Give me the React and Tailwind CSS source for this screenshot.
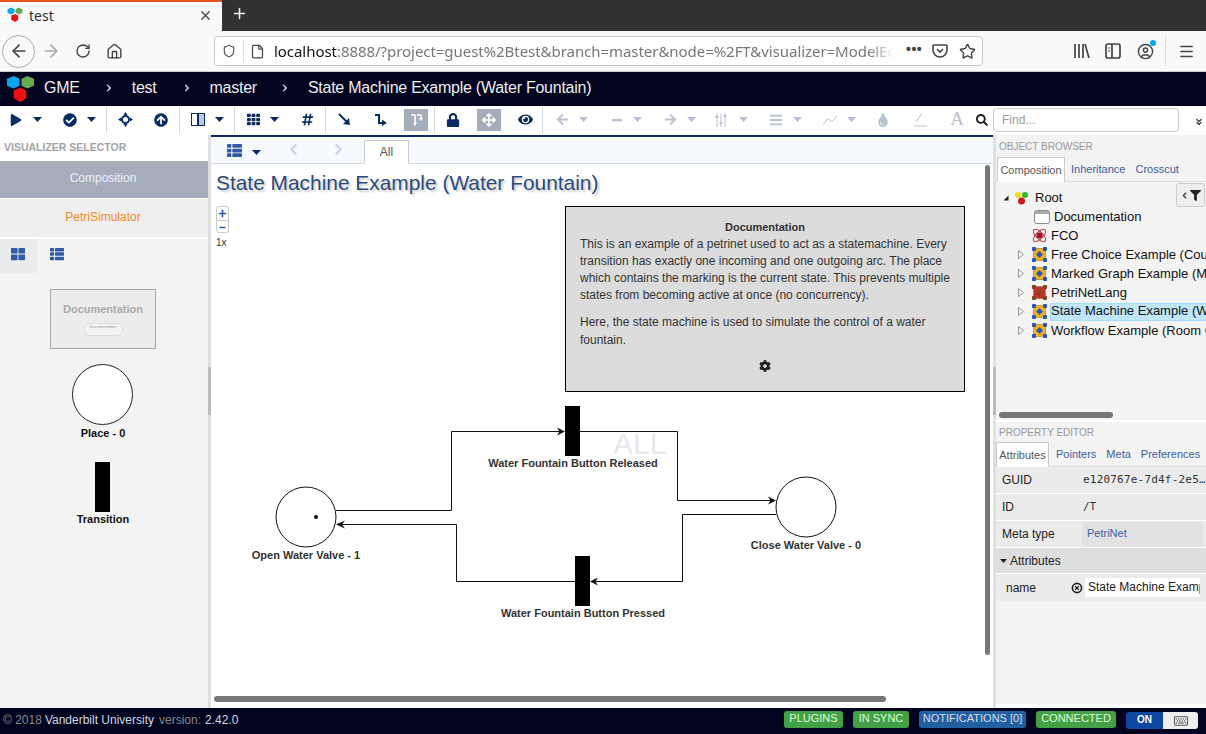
import { ArrowLeft, ArrowRight, RotateCw, Home, File, Star, CircleUser, Menu, X, Plus, Shield, ChevronsDown } from 'lucide-react';
import { FaCheckCircle, FaArrowCircleUp, FaTh, FaThLarge, FaThList, FaHashtag, FaLock, FaArrowsAlt, FaEye, FaArrowLeft, FaArrowRight, FaMinus, FaBars, FaTint, FaSearch, FaPlay, FaCog, FaFilter, FaChevronLeft, FaChevronRight, FaRegKeyboard } from 'react-icons/fa';

const NAVY = 'text-[#0b2c63]';
const FADED = 'text-[#b9c2d3]';

function Hexes({ size = 30 }) {
  return (
    <svg width={size} height={size} viewBox="0 0 30 30">
      <polygon points="8,1 14,4 14,11 8,14 1,11 1,4" fill="#0aa5f0" />
      <polygon points="22,1 29,4 29,11 22,14 16,11 16,4" fill="#6aa84f" />
      <polygon points="15,13 21,16 21,24 15,28 8,24 8,16" fill="#ee1111" />
    </svg>
  );
}

function Caret({ className = '', faded }) {
  return <span className={`w-[10px] h-[5px] shrink-0 flex justify-center ${className}`}>
    <svg width="9" height="5" viewBox="0 0 9 5"><polygon points="0,0 9,0 4.5,5" fill={faded ? '#b9c2d3' : '#0b2c63'} /></svg>
  </span>;
}

function Tool({ className = '', children, faded }) {
  return <span className={`w-6 h-[22px] shrink-0 flex items-center justify-center ${faded ? FADED : NAVY} ${className}`}>{children}</span>;
}

function Sep({ className = '' }) {
  return <span className={`w-px h-[26px] shrink-0 bg-[#d5d9e5] ${className}`} />;
}

function ModelIcon({ fill = '#eeb024', accent = '#2f55b5' }) {
  return (
    <svg width="15" height="15" viewBox="0 0 15 15" className="shrink-0">
      <rect x="1.5" y="1.5" width="12" height="12" fill={fill} stroke="#9a7a30" strokeWidth="0.6" />
      <rect x="0" y="0" width="4" height="4" rx="0.8" fill={accent} />
      <rect x="11" y="0" width="4" height="4" rx="0.8" fill={accent} />
      <rect x="0" y="11" width="4" height="4" rx="0.8" fill={accent} />
      <rect x="11" y="11" width="4" height="4" rx="0.8" fill={accent} />
      <polygon points="7.5,4 11,7.5 7.5,11 4,7.5" fill={accent} />
    </svg>
  );
}

function TreeRow({ label, icon, selected, expander, indent }) {
  return (
    <div className={`h-[19px] flex items-center ${indent}`}>
      {expander && (
        <svg width="6" height="9" viewBox="0 0 6 9" className="mr-[8px] shrink-0"><polygon points="0.5,0.5 5.5,4.5 0.5,8.5" fill="none" stroke="#999" /></svg>
      )}
      {icon}
      <span className={`ml-[3px] h-[18px] whitespace-nowrap grow overflow-hidden ${selected ? 'bg-[#bfe6fb] border-y border-l border-[#a8dcf7] leading-[14px]' : 'pl-px leading-[17px]'}`}>{label}</span>
    </div>
  );
}

function PropRow({ label, children, className = '' }) {
  return (
    <div className={`h-[27px] flex items-center bg-[#ebebeb] border-b border-white ${className}`}>
      <span className="w-[80px] pl-[6px] text-[12px] text-[#222] shrink-0">{label}</span>
      {children}
    </div>
  );
}

function Badge({ className, children }) {
  return <span className={`h-[17px] rounded-[3px] text-[11px] leading-[14px] text-center ${className}`}>{children}</span>;
}

function Node({ className, label }) {
  return <div className={`absolute w-[240px] text-center text-[11px] font-bold leading-[13px] text-[#333] ${className}`}>{label}</div>;
}

export default function App() {
  return (
    <div className="w-[1206px] h-[734px] overflow-hidden flex flex-col bg-white font-['Liberation_Sans',Arial,sans-serif]">
      {/* browser tabs */}
      <div className="h-[31px] bg-[#323234] flex shrink-0">
        <div className="w-[222px] bg-[#f9f9fa] border-t-2 border-[#e8531f] flex items-center pl-[7px] pb-[3px]">
          <Hexes size={16} />
          <span className="ml-[6px] text-[14px] text-[#333] font-['Noto_Sans',sans-serif]">test</span>
          <X size={15} className="ml-auto mr-[9px] text-[#444]" />
        </div>
        <Plus size={17} strokeWidth={2.2} className="ml-[9px] mt-[5px] text-[#eee]" />
      </div>
      {/* browser nav */}
      <div className="h-[41px] bg-[#f9f9fa] border-b border-[#ccc] shrink-0 flex items-center">
        <span className="ml-[2px] w-[33px] h-[33px] rounded-full border border-[#aaa] flex items-center justify-center">
          <ArrowLeft size={20} className="text-[#444]" />
        </span>
        <ArrowRight size={20} className="ml-[6px] text-[#aaa]" />
        <RotateCw size={16} className="ml-[14px] text-[#444]" />
        <Home size={17} className="ml-[15px] text-[#444]" />
        <div className="ml-[91px] w-[769px] h-[30px] bg-white rounded border border-[#ccc] flex items-center">
          <Shield size={14} className="ml-[7px] text-[#555] shrink-0" />
          <span className="ml-[7px] w-px h-[22px] bg-[#ddd] shrink-0" />
          <File size={15} className="ml-[6px] text-[#444] shrink-0" />
          <div className="ml-[9px] w-[620px] overflow-hidden whitespace-nowrap text-[15px] tracking-[-0.05px] font-['Noto_Sans',sans-serif] text-[#777] [mask-image:linear-gradient(to_right,#000_96%,transparent)]">
            <span className="text-[#111]">localhost</span>:8888/?project=guest%2Btest&branch=master&node=%2FT&visualizer=ModelEditor
          </div>
          <span className="ml-[12px] text-[14px] font-bold tracking-[0.5px] text-[#444] leading-[14px] -mt-[4px]">•••</span>
          <svg width="16" height="16" viewBox="0 0 16 16" className="ml-[10px] shrink-0"><path d="M2 2h12a1 1 0 0 1 1 1v4a7 7 0 0 1-14 0V3a1 1 0 0 1 1-1zM5 6l3 3 3-3" fill="none" stroke="#444" strokeWidth="1.6" /></svg>
          <Star size={17} className="ml-[11px] text-[#444] shrink-0" />
        </div>
        <svg width="17" height="16" viewBox="0 0 17 16" className="ml-[90px]"><path d="M2 1v14M6 1v14M10 1v14M12 1l4 14" fill="none" stroke="#444" strokeWidth="1.7" /></svg>
        <svg width="16" height="16" viewBox="0 0 16 16" className="ml-[15px]"><rect x="1" y="1" width="14" height="14" rx="2" fill="none" stroke="#444" strokeWidth="1.7" /><path d="M7 1v14" stroke="#444" strokeWidth="1.7" /><path d="M3 5h2M3 8h2" stroke="#444" /></svg>
        <span className="ml-[16px] relative">
          <CircleUser size={17} className="text-[#444]" />
          <span className="absolute -top-[3px] -right-[2px] w-[6px] h-[6px] rounded-full bg-[#0aa5f0]" />
        </span>
        <span className="ml-[11px] w-px h-[30px] bg-[#ddd]" />
        <Menu size={17} className="ml-[12px] text-[#444]" />
      </div>
      {/* app header */}
      <div className="h-[34px] bg-[#02041f] text-[#eee] text-[16px] flex items-center shrink-0 tracking-[-0.25px] pb-[2px]">
        <span className="ml-[6px] mt-[2px]"><Hexes size={29} /></span>
        <span className="ml-[9px]">GME</span>
        <FaChevronRight size={8} className="ml-[25px]" />
        <span className="ml-[19px]">test</span>
        <FaChevronRight size={8} className="ml-[26px]" />
        <span className="ml-[19px]">master</span>
        <FaChevronRight size={8} className="ml-[24px]" />
        <span className="ml-[19px]">State Machine Example (Water Fountain)</span>
      </div>
      {/* toolbar */}
      <div className="h-[29px] bg-white flex items-center shrink-0 pl-[4px] pb-[2px]">
        <Tool><FaPlay size={12} /></Tool>
        <Caret className="ml-[4px]" />
        <Tool className="ml-[16px]"><FaCheckCircle size={14} /></Tool>
        <Caret className="ml-[4px]" />
        <Sep className="ml-[10px]" />
        <Tool className="ml-[6px]">
          <svg width="15" height="15" viewBox="0 0 15 15"><path d="M7.5 0l2 3h-4zM7.5 15l-2-3h4zM0 7.5l3-2v4zM15 7.5l-3 2v-4z" fill="currentColor" /><circle cx="7.5" cy="7.5" r="3.5" fill="none" stroke="currentColor" strokeWidth="2" /></svg>
        </Tool>
        <Tool className="ml-[12px]"><FaArrowCircleUp size={14} /></Tool>
        <Sep className="ml-[6px]" />
        <Tool className="ml-[6px]">
          <svg width="14" height="13" viewBox="0 0 14 13"><rect x="0.5" y="0.5" width="13" height="12" fill="none" stroke="currentColor" /><rect x="6" y="0" width="2" height="13" fill="currentColor" /><rect x="8" y="1" width="5" height="11" fill="#b9c8e6" /></svg>
        </Tool>
        <Caret className="ml-[4px]" />
        <Sep className="ml-[10px]" />
        <Tool className="ml-[6px]"><FaTh size={13} /></Tool>
        <Caret className="ml-[4px]" />
        <Tool className="ml-[16px]"><FaHashtag size={13} /></Tool>
        <Sep className="ml-[6px]" />
        <Tool className="ml-[6px]">
          <svg width="13" height="13" viewBox="0 0 13 13"><path d="M1 1l8 8" stroke="currentColor" strokeWidth="2" /><polygon points="12,12 5,11 11,5" fill="currentColor" /></svg>
        </Tool>
        <Tool className="ml-[12px]">
          <svg width="13" height="13" viewBox="0 0 13 13"><path d="M1 2h4v8h4" fill="none" stroke="currentColor" strokeWidth="2" /><polygon points="13,10 8,6.5 8,13" fill="currentColor" /></svg>
        </Tool>
        <span className="ml-[12px] w-6 h-[22px] shrink-0 bg-[#a6adba] flex items-center justify-center">
          <svg width="13" height="13" viewBox="0 0 13 13"><path d="M1 2h4v9M7 2h4v4" fill="none" stroke="#fff" strokeWidth="1.6" /><polygon points="9,5 13,5 11,8" fill="#fff" /><polygon points="3,10 7,10 5,13" fill="#fff" /></svg>
        </span>
        <Sep className="ml-[6px]" />
        <Tool className="ml-[6px]"><FaLock size={14} /></Tool>
        <span className="ml-[12px] w-6 h-[22px] shrink-0 bg-[#a6adba] flex items-center justify-center text-white"><FaArrowsAlt size={14} /></span>
        <Tool className="ml-[12px]"><FaEye size={15} /></Tool>
        <Sep className="ml-[5px]" />
        <Tool faded className="ml-[7px]"><FaArrowLeft size={13} /></Tool>
        <Caret faded className="ml-[4px]" />
        <Tool faded className="ml-[17px]"><FaMinus size={12} /></Tool>
        <Caret faded className="ml-[3px]" />
        <Tool faded className="ml-[16px]"><FaArrowRight size={13} /></Tool>
        <Caret faded className="ml-[4px]" />
        <Tool faded className="ml-[13px]">
          <svg width="12" height="14" viewBox="0 0 12 14"><path d="M2 0v14M6 0v14M10 0v14" stroke="currentColor" /><rect x="0.5" y="3" width="3" height="2" fill="currentColor" /><rect x="4.5" y="9" width="3" height="2" fill="currentColor" /><rect x="8.5" y="2" width="3" height="2" fill="currentColor" /></svg>
        </Tool>
        <Caret faded className="ml-[5px]" />
        <Tool faded className="ml-[16px]"><FaBars size={14} /></Tool>
        <Caret faded className="ml-[4px]" />
        <Tool faded className="ml-[16px]">
          <svg width="14" height="10" viewBox="0 0 14 10"><path d="M0 9c3 0 3-5 5-5s2 3 4 2 3-4 5-5" fill="none" stroke="currentColor" /></svg>
        </Tool>
        <Caret faded className="ml-[4px]" />
        <Tool faded className="ml-[15px]"><FaTint size={14} /></Tool>
        <Tool faded className="ml-[13px]">
          <svg width="13" height="15" viewBox="0 0 13 15"><path d="M2 10L8 1M0 14h13" stroke="currentColor" /></svg>
        </Tool>
        <Tool faded className="ml-[13px] font-['Liberation_Serif',serif] text-[19px]">A</Tool>
        <span className="ml-[6px] w-[14px] flex justify-center text-[#222] shrink-0"><FaSearch size={12} /></span>
        <span className="ml-[4px] mt-[1px] w-[186px] h-[24px] shrink-0 bg-white rounded border border-[#ccc] px-[8px] text-[12px] leading-[22px] text-[#999]">Find...</span>
        <ChevronsDown size={10} strokeWidth={3} className="ml-[15px] mt-[4px] text-[#333]" />
      </div>

      {/* main */}
      <div className="h-[573px] flex shrink-0">
        {/* left panel */}
        <div className="w-[208px] shrink-0 flex flex-col bg-[#f3f3f3]">
          <div className="h-[26px] bg-white pl-[4px] text-[10.5px] font-bold leading-[24px] text-[#a3a3a3]">VISUALIZER SELECTOR</div>
          <div className="h-[37px] bg-[#a6adba] pr-[2px] text-[12px] text-center leading-[34px] text-[#eef]">Composition</div>
          <div className="h-[39px] bg-[#eeeeee] border-t border-white pr-[2px] text-[12px] text-center leading-[36px] text-[#f58a1f]">PetriSimulator</div>
          <div className="h-[2px] bg-white" />
          <div className="h-[34px] flex items-start">
            <span className="w-[37px] h-[34px] bg-[#ebebeb] flex items-center justify-center pb-[4px] pr-px text-[#2f5ba8]"><FaThLarge size={14} /></span>
            <span className="ml-[10px] mt-[8px] w-5 flex justify-center text-[#2f5ba8]"><FaThList size={14} /></span>
          </div>
          <div className="mt-[16px] ml-[50px] w-[106px] h-[60px] bg-[#ececec] border border-[#a8a8a8] flex flex-col items-center">
            <span className="mt-[13px] text-[11px] font-bold leading-[13px] text-[#aaa]">Documentation</span>
            <span className="mt-[7px] w-[39px] h-[13px] rounded-[6px] bg-[#f3f3f3] border border-[#ddd] text-[4px] leading-[6px] text-center text-[#999]">Documentation</span>
          </div>
          <div className="mt-[15px] ml-[72px] w-[61px] h-[61px] rounded-full bg-white border border-[#222]" />
          <div className="mt-[2px] pr-[2px] text-center text-[11px] font-bold leading-[13px] text-[#111]">Place - 0</div>
          <div className="mt-[22px] ml-[95px] w-[15px] h-[50px] bg-black" />
          <div className="mt-px pr-[2px] text-center text-[11px] font-bold leading-[13px] text-[#111]">Transition</div>
        </div>
        {/* splitter */}
        <div className="w-[3px] shrink-0 bg-[#e0e0e0] flex items-center">
          <span className="w-full h-[48px] -mt-[62px] bg-[#bbbbbb]" />
        </div>
        {/* canvas */}
        <div className="w-[782px] shrink-0 flex flex-col relative">
          <div className="h-[29px] shrink-0 border-t-2 border-[#0b2c63] border-b border-b-[#d5d9e5] bg-[#f6f9fd] flex items-end">
            <span className="ml-[13px] mb-[5px] w-5 flex justify-center text-[#2f5ba8]"><FaThList size={15} /></span>
            <Caret className="ml-[7px] mb-[8px]" />
            <FaChevronLeft size={13} className="ml-[26px] mb-[7px] text-[#c5d2ea]" />
            <FaChevronRight size={13} className="ml-[32px] mb-[7px] text-[#c5d2ea]" />
            <span className="ml-[19px] w-[45px] h-[24px] -mb-px bg-white border border-[#ccc] border-b-white text-center text-[12px] leading-[23px] text-[#555]">All</span>
          </div>
          <div className="ml-[5px] mt-[7px] text-[20.9px] leading-[24px] text-[#294a7d] [text-shadow:2px_2px_2px_#ccc] whitespace-nowrap">State Machine Example (Water Fountain)</div>
          <div className="ml-[5px] mt-[11px] w-[13px] h-[27px] rounded-[3px] border border-[#ccc] flex flex-col items-center text-[#2f5ba8]">
            <Plus size={11} strokeWidth={3.5} className="my-px" />
            <span className="w-full h-px bg-[#ccc]" />
            <FaMinus size={7} className="mt-[3px]" />
          </div>
          <div className="ml-[5px] mt-[4px] text-[10px] leading-[12px] text-[#333]">1x</div>

          {/* diagram canvas */}
          <svg className="absolute left-0 top-0" width="782" height="573" viewBox="211 135 782 573">
            <g fill="none" stroke="#111" strokeWidth="1">
              <path d="M336 510.5H451.5V431.5H560" />
              <path d="M580 431.5H677.5V500.5H771" />
              <path d="M776 514.5H682.5V581.5H595" />
              <path d="M575 581.5H456.5V524.5H341" />
              <circle cx="306" cy="517" r="30" fill="#fff" strokeWidth="1" />
              <circle cx="806" cy="507" r="30" fill="#fff" strokeWidth="1" />
            </g>
            <polygon points="565,431.5 557,427.5 559.5,431.5 557,435.5" fill="#111" />
            <polygon points="776,500.5 768,496.5 770.5,500.5 768,504.5" fill="#111" />
            <polygon points="590,581.5 598,577.5 595.5,581.5 598,585.5" fill="#111" />
            <polygon points="336,524.5 345,520.5 342,524.5 345,528.5" fill="#111" />
            <circle cx="316" cy="517" r="2" fill="#111" />
            <rect x="565" y="406" width="15" height="50" fill="#000" />
            <rect x="575" y="556" width="15" height="50" fill="#000" />
          </svg>
          <div className="absolute left-[402px] top-[291px] text-[30px] leading-[36px] text-[#e6e8ec]">ALL</div>
          <Node className="left-[242px] top-[322px]" label="Water Fountain Button Released" />
          <Node className="left-[252px] top-[472px]" label="Water Fountain Button Pressed" />
          <Node className="left-[-25px] top-[414px]" label="Open Water Valve - 1" />
          <Node className="left-[475px] top-[404px]" label="Close Water Valve - 0" />
          <div className="absolute left-[354px] top-[71px] w-[400px] h-[186px] bg-[#dcdcdc] border border-black px-[14px] text-[12px] leading-[17px] text-[#333]">
            <div className="mt-[14px] text-center text-[11px] font-bold leading-[13px]">Documentation</div>
            <p className="mt-[2px] whitespace-nowrap">This is an example of a petrinet used to act as a statemachine. Every<br />transition has exactly one incoming and one outgoing arc. The place<br />which contains the marking is the current state. This prevents multiple<br />states from becoming active at once (no concurrency).</p>
            <p className="mt-[9px] leading-[18px]">Here, the state machine is used to simulate the control of a water fountain.</p>
            <div className="mt-[11px] flex justify-center text-[#222]"><FaCog size={12} /></div>
          </div>
          {/* scrollbars */}
          <span className="absolute left-[774px] top-[30px] w-[5px] h-[490px] rounded bg-[#777]" />
          <span className="absolute left-[3px] top-[561px] w-[672px] h-[6px] rounded bg-[#777]" />
        </div>
        {/* splitter */}
        <div className="w-[3px] shrink-0 bg-[#e0e0e0] flex items-center">
          <span className="w-full h-[48px] -mt-[62px] bg-[#bbbbbb]" />
        </div>
        {/* right panel */}
        <div className="w-[210px] shrink-0 flex flex-col bg-[#f3f3f3] overflow-hidden relative">
          <div className="h-[285px] shrink-0 flex flex-col">
            <div className="h-[22px] pl-[3px] pt-px text-[10px] leading-[22px] text-[#999]">OBJECT BROWSER</div>
            <div className="h-[25px] flex border-b border-[#ddd] text-[11px] text-[#3b5fa0]">
              <span className="ml-px w-[68px] h-[25px] bg-white border border-[#ccc] border-b-white text-center leading-[24px] text-[#555]">Composition</span>
              <span className="ml-[6px] leading-[24px]">Inheritance</span>
              <span className="ml-[10px] leading-[24px]">Crosscut</span>
            </div>
            <div className="relative text-[13px] text-[#111] pt-[6px] overflow-hidden">
              <TreeRow indent="pl-[7px]" label="Root" icon={
                <>
                  <svg width="6" height="6" viewBox="0 0 6 6" className="mr-[5px]"><polygon points="5.5,0.5 5.5,5.5 0.5,5.5" fill="#222" /></svg>
                  <svg width="15" height="14" viewBox="0 0 15 14" className="mr-[2px]"><circle cx="4" cy="4" r="3" fill="#e8e020" /><circle cx="11" cy="4" r="3" fill="#2fb52f" /><circle cx="7.5" cy="10" r="3.5" fill="#d01a1a" /></svg>
                </>
              } />
              <TreeRow indent="pl-[38px]" label="Documentation" icon={
                <svg width="16" height="14" viewBox="0 0 16 14"><rect x="0.5" y="0.5" width="15" height="13" rx="2" fill="#fff" stroke="#888" /><rect x="1" y="1" width="14" height="3" fill="#aaa" /></svg>
              } />
              <TreeRow indent="pl-[36px]" label="FCO" icon={
                <svg width="15" height="15" viewBox="0 0 15 15" className="shrink-0"><g fill="none" stroke="#b5434b"><ellipse cx="7.5" cy="7.5" rx="8" ry="3.5" transform="rotate(45 7.5 7.5)" /><ellipse cx="7.5" cy="7.5" rx="8" ry="3.5" transform="rotate(-45 7.5 7.5)" /></g><circle cx="7.5" cy="7.5" r="3" fill="#a01020" /></svg>
              } />
              <TreeRow indent="pl-[22px]" expander label="Free Choice Example (Courses)" icon={<ModelIcon />} />
              <TreeRow indent="pl-[22px]" expander label="Marked Graph Example (Meals)" icon={<ModelIcon />} />
              <TreeRow indent="pl-[22px]" expander label="PetriNetLang" icon={<ModelIcon fill="#c9302c" accent="#7a4a1a" />} />
              <TreeRow indent="pl-[22px]" expander selected label="State Machine Example (Water Fountain)" icon={<ModelIcon />} />
              <TreeRow indent="pl-[22px]" expander label="Workflow Example (Room Cleaning)" icon={<ModelIcon />} />
              <div className="absolute right-[1px] top-[1px] w-[29px] h-[24px] bg-[#eee] border border-[#ccc] rounded-[3px] flex items-center justify-center text-[#222]">
                <FaChevronLeft size={7} className="mr-[2px]" />
                <FaFilter size={11} />
              </div>
            </div>
            <span className="mt-auto mb-[2px] ml-[3px] w-[114px] h-[6px] rounded bg-[#777] shrink-0" />
          </div>
          <div className="h-[2px] bg-white shrink-0" />
          <div className="h-[20px] pl-[3px] pt-px text-[10px] leading-[20px] text-[#999] shrink-0">PROPERTY EDITOR</div>
          <div className="h-[25px] flex border-b border-[#ddd] text-[11px] text-[#3b5fa0] shrink-0">
            <span className="w-[53px] h-[25px] bg-white border border-[#ccc] border-b-white text-center leading-[24px] text-[#555]">Attributes</span>
            <span className="ml-[7px] leading-[24px]">Pointers</span>
            <span className="ml-[10px] leading-[24px]">Meta</span>
            <span className="ml-[10px] leading-[24px]">Preferences</span>
          </div>
          <div className="shrink-0">
            <PropRow label="GUID"><span className="ml-[7px] text-[11px] tracking-[0.2px] font-['DejaVu_Sans_Mono',monospace] text-[#333]">e120767e-7d4f-2e5…</span></PropRow>
            <PropRow label="ID"><span className="ml-[7px] text-[11px] font-['DejaVu_Sans_Mono',monospace] text-[#333]">/T</span></PropRow>
            <PropRow label="Meta type"><span className="ml-[6px] w-[121px] h-[25px] rounded bg-[#e2e2e2] pl-[5px] text-[11px] leading-[22px] text-[#3b5fa0]">PetriNet</span></PropRow>
            <div className="h-[26px] flex items-center bg-[#dedede] border-b border-white text-[12px] text-[#222]">
              <svg width="7" height="4" viewBox="0 0 7 4" className="ml-[4px] mr-[3px]"><polygon points="0,0 7,0 3.5,4" fill="#222" /></svg>
              Attributes
            </div>
            <div className="h-[27px] flex items-center bg-[#ebebeb] text-[12px] text-[#222]">
              <span className="ml-[10px] w-[65px]">name</span>
              <svg width="12" height="12" viewBox="0 0 12 12" className="shrink-0"><circle cx="6" cy="6" r="4.6" fill="none" stroke="#222" strokeWidth="1.6" /><path d="M4.2 4.2l3.6 3.6M7.8 4.2l-3.6 3.6" stroke="#222" strokeWidth="1.3" /></svg>
              <span className="ml-[2px] w-[115px] h-[19px] bg-white pl-[3px] text-[12px] leading-[19px] overflow-hidden whitespace-nowrap">State Machine Example</span>
            </div>
          </div>
          <div className="absolute left-0 right-0 bottom-0 h-[4px] bg-white" />
        </div>
      </div>

      {/* footer */}
      <div className="h-[26px] bg-[#02041f] shrink-0 flex items-start text-[12px] leading-[24px]">
        <span className="ml-[3px] text-[#888]">© 2018</span>
        <span className="ml-[3px] text-[#cfd8e6]">Vanderbilt University</span>
        <span className="ml-[5px] text-[#888]">version:</span>
        <span className="ml-[4px] text-[#cfd8e6]">2.42.0</span>
        <Badge className="ml-auto mt-[3px] w-[59px] bg-[#43a047] text-[#dfd]">PLUGINS</Badge>
        <Badge className="ml-[10px] mt-[3px] w-[56px] bg-[#43a047] text-[#dfd]">IN SYNC</Badge>
        <Badge className="ml-[10px] mt-[3px] w-[107px] bg-[#22609f] text-[#dde]">NOTIFICATIONS [0]</Badge>
        <Badge className="ml-[10px] mt-[3px] w-[80px] bg-[#43a047] text-[#dfd]">CONNECTED</Badge>
        <div className="ml-[10px] mr-[8px] mt-[4px] w-[72px] h-[17px] rounded-[3px] overflow-hidden flex">
          <span className="w-[37px] bg-[#0d47a1] text-center text-[10px] font-bold leading-[15px] text-white">ON</span>
          <span className="w-[35px] bg-[#eeeeee] flex items-center justify-center text-[#555]"><FaRegKeyboard size={14} /></span>
        </div>
      </div>
    </div>
  );
}
